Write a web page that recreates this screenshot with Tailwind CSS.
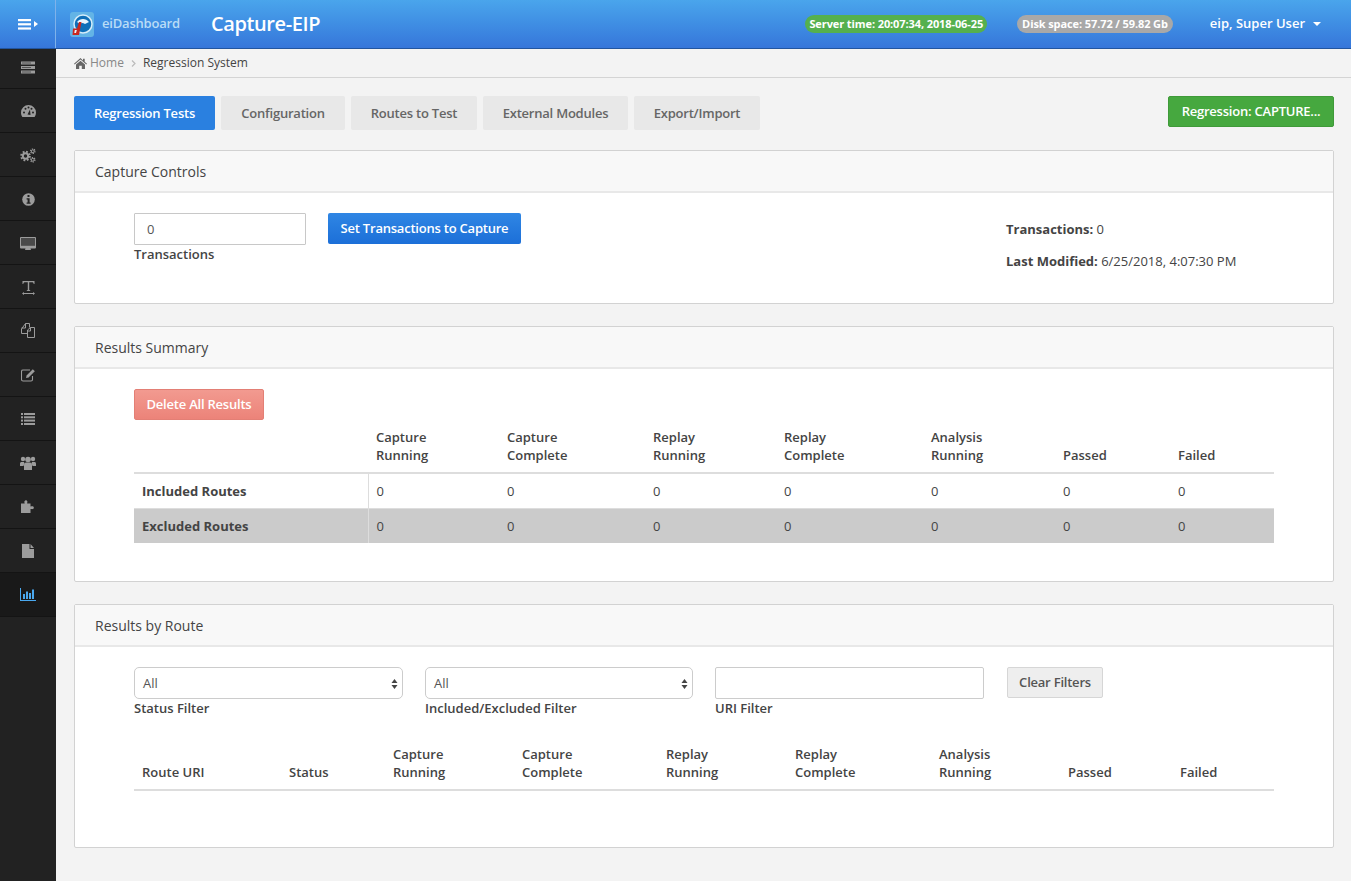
<!DOCTYPE html>
<html lang="en">
<head>
    <meta charset="UTF-8">
    <title>Capture-EIP</title>
    <script src="https://cdn.jsdelivr.net/npm/@tailwindcss/browser@4"></script>
</head>
<body class="font-['Open_Sans',sans-serif] text-[13px] text-[#444] bg-[#f3f3f3] h-[881px] overflow-hidden flex flex-col">

    <!-- top bar -->
    <header class="h-[49px] shrink-0 flex items-center bg-gradient-to-b from-[#4aa5ec] to-[#3676da] border-b border-[#22559f] text-white">
        <div class="w-[56px] h-full flex items-center justify-center gap-[3px] border-r border-[#7fb2ea]">
            <svg width="13" height="11" viewBox="0 0 13 11" fill="#fff"><rect y="0" width="13" height="2.2"/><rect y="4.2" width="13" height="2.2"/><rect y="8.4" width="13" height="2.2"/></svg>
            <svg width="4" height="6" viewBox="0 0 4 6" fill="#fff"><path d="M0 0l4 3-4 3z"/></svg>
        </div>
        <div class="ml-[14px] flex items-center">
            <svg width="24" height="25" viewBox="0 0 24 25">
                <rect width="24" height="25" rx="3" fill="#63b4e6"/>
                <circle cx="13" cy="12" r="9" fill="#0f6fb8" stroke="#d5ecf9" stroke-width="1.500"/>
                <path d="M7 10c3-4 9-4 12 0l-4 2c-2-1.500-4-1.500-5 0z" fill="#e8f5fc"/>
                <path d="M9 10h2.500L9 23H2.500L3 16.500h4z" fill="#c8281f"/>
                <path d="M4.800 18h2l-.8 3H4.300z" fill="#e9f4fb"/>
            </svg>
            <span class="ml-[8px] text-[13px] font-semibold tracking-[-0.2px] text-[#b9dcf6] w-[85px]">eiDashboard</span>
        </div>
        <h1 class="ml-[24px] text-[20px] font-semibold tracking-[-0.4px] leading-none">Capture-EIP</h1>
        <span class="ml-auto h-[18px] px-[4px] rounded-full bg-[#55b04e] text-[11px] font-bold tracking-[-0.1px] leading-[18px]">Server time: 20:07:34, 2018-06-25</span>
        <span class="ml-[30px] h-[18px] px-[5px] rounded-full bg-[#a8a8a8] text-[11px] font-bold tracking-[-0.1px] leading-[18px]">Disk space: 57.72 / 59.82 Gb</span>
        <span class="ml-[37px] text-[13px] font-semibold">eip, Super User</span>
        <span class="ml-[8px] mr-[30px] w-0 h-0 border-x-[4px] border-x-transparent border-t-[4px] border-t-white"></span>
    </header>

    <div class="flex flex-1 min-h-0">
        <!-- icon rail -->
        <nav class="w-[56px] shrink-0 bg-[#222] text-[#9c9c9c] flex flex-col">
            <a class="h-[40px] pb-[2px] flex items-center justify-center border-b border-[#141414]">
                <svg width="15" height="13" viewBox="0 0 15 13" fill="currentColor"><rect y="0.5" width="14" height="3"/><rect y="5" width="14" height="3"/><rect y="9.5" width="14" height="3"/><rect x="1" y="1.500" width="9" height="1" fill="#555"/><rect x="1" y="6" width="9" height="1" fill="#555"/><rect x="1" y="10.500" width="9" height="1" fill="#555"/></svg>
            </a>
            <a class="h-[44px] flex items-center justify-center border-b border-[#141414]">
                <svg width="15" height="12" viewBox="0 0 15 12" fill="currentColor"><path d="M7.500 0A7.500 7.500 0 0 0 0 7.500c0 1.700.5 3.200 1.400 4.500h12.200A7.500 7.500 0 0 0 15 7.500 7.500 7.500 0 0 0 7.500 0z"/><circle cx="3" cy="7.500" r="1" fill="#222"/><circle cx="4.500" cy="3.800" r="1" fill="#222"/><circle cx="7.500" cy="2.500" r="1" fill="#222"/><circle cx="10.500" cy="3.800" r="1" fill="#222"/><circle cx="12" cy="7.500" r="1" fill="#222"/><path d="M6.500 9.500l2.500-5 .5 5.500z" fill="#222"/></svg>
            </a>
            <a class="h-[44px] pt-[2px] flex items-center justify-center border-b border-[#141414]">
                <svg width="16" height="15" viewBox="0 0 16 15" fill="none" stroke="currentColor"><circle cx="5.500" cy="8" r="4.300" stroke-width="2" stroke-dasharray="1.800 1.580"/><circle cx="5.500" cy="8" r="2.700" stroke-width="2"/><circle cx="12.800" cy="3.200" r="2.200" stroke-width="1.200" stroke-dasharray="1.200 .9"/><circle cx="12.800" cy="3.200" r="1.400" stroke-width="1"/><circle cx="12.800" cy="11.800" r="2.200" stroke-width="1.200" stroke-dasharray="1.200 .9"/><circle cx="12.800" cy="11.800" r="1.400" stroke-width="1"/></svg>
            </a>
            <a class="h-[44px] pt-[1px] flex items-center justify-center border-b border-[#141414]">
                <svg width="13" height="13" viewBox="0 0 13 13"><circle cx="6.500" cy="6.500" r="6.300" fill="currentColor"/><rect x="5.500" y="2" width="2" height="2" fill="#222"/><path d="M4.600 5.200h3v4.200h1v1.300H4.600V9.400h1V6.500h-1z" fill="#222"/></svg>
            </a>
            <a class="h-[44px] pt-[2px] flex items-center justify-center border-b border-[#141414]">
                <svg width="16" height="14" viewBox="0 0 16 14"><path d="M1 0h14a1 1 0 0 1 1 1v9.500a1 1 0 0 1-1 1h-4.500l.5 1.500H5l.5-1.500H1a1 1 0 0 1-1-1V1a1 1 0 0 1 1-1z" fill="currentColor"/><rect x="1" y="1" width="14" height="7.800" fill="#4a4a4a"/></svg>
            </a>
            <a class="h-[44px] pt-[2px] flex items-center justify-center border-b border-[#141414]">
                <svg width="13" height="14" viewBox="0 0 13 14" fill="currentColor"><path d="M0.500 0h12v3h-.8c-.2-1-.5-1.700-1.200-1.700H7.200v7.700l1 .3v.6H4.800V9.300l1-.3V1.300H2.500c-.7 0-1 .7-1.200 1.700H.500z"/><path d="M0 12.500l2-1.500v1h9v-1l2 1.500L11 14v-1H2v1z"/></svg>
            </a>
            <a class="h-[44px] flex items-center justify-center border-b border-[#141414]">
                <svg width="14" height="15" viewBox="0 0 14 15" fill="none" stroke="currentColor" stroke-width="1"><path d="M6.500 10.500H.500V6l4-5.500h4v4"/><path d="M4.500.5V5H.5"/><path d="M6.500 14.500V7l3-2.500h4v10z"/><path d="M9.500 4.500V8h-3"/></svg>
            </a>
            <a class="h-[44px] flex items-center justify-center border-b border-[#141414]">
                <svg width="15" height="14" viewBox="0 0 15 14" fill="none" stroke="currentColor"><path d="M11.500 8v3.500a1.500 1.500 0 0 1-1.500 1.500H2a1.500 1.500 0 0 1-1.500-1.500v-8A1.500 1.500 0 0 1 2 2h7" stroke-width="1.100"/><path d="M5 10l.6-2.600L11.800 1.200l2 2L7.600 9.400z" fill="currentColor" stroke="none"/></svg>
            </a>
            <a class="h-[44px] flex items-center justify-center border-b border-[#141414]">
                <svg width="14" height="12" viewBox="0 0 14 12" fill="currentColor"><rect y="0" width="2" height="2"/><rect x="3" y="0" width="11" height="2"/><rect y="3.300" width="2" height="2"/><rect x="3" y="3.300" width="11" height="2"/><rect y="6.600" width="2" height="2"/><rect x="3" y="6.600" width="11" height="2"/><rect y="10" width="2" height="2"/><rect x="3" y="10" width="11" height="2"/></svg>
            </a>
            <a class="h-[44px] flex items-center justify-center border-b border-[#141414]">
                <svg width="16" height="14" viewBox="0 0 16 14" fill="currentColor"><circle cx="3" cy="3" r="2.200"/><circle cx="13" cy="3" r="2.200"/><circle cx="8" cy="3.500" r="2.800"/><path d="M0 10V7.500C0 6.500.8 6 1.500 6H4l.5 1.500L3.500 10z"/><path d="M16 10V7.500c0-1-.8-1.500-1.500-1.500H12l-.5 1.500 1 2.500z"/><path d="M4 14V9c0-1.500 1-2.500 2-2.500h4c1 0 2 1 2 2.500v5z"/></svg>
            </a>
            <a class="h-[44px] flex items-center justify-center border-b border-[#141414]">
                <svg width="14" height="13" viewBox="0 0 14 13" fill="currentColor"><path d="M0 3.500h3.500c.5-.5-.5-1 0-2.300C4 0 6 0 6.300 1.200c.4 1.300-.5 1.800 0 2.300H9.500v2.800c.5.500 1-.3 2.200 0 1.500.4 1.500 2.400 0 2.800-1.200.3-1.700-.5-2.200 0V13H0z"/></svg>
            </a>
            <a class="h-[44px] flex items-center justify-center border-b border-[#141414]">
                <svg width="12" height="14" viewBox="0 0 12 14" fill="currentColor"><path d="M0 0h7.500v5H12v9H0z"/><path d="M8.500 0L12 4H8.500z"/></svg>
            </a>
            <a class="h-[44px] flex items-center justify-center bg-[#191919] border-b border-[#141414] text-[#4aa8ee]">
                <svg width="16" height="13" viewBox="0 0 16 13" fill="currentColor"><path d="M0 0h1v12h15v1H0z"/><rect x="3" y="6" width="2" height="5"/><rect x="6" y="3.500" width="2" height="7.500"/><rect x="9" y="5" width="2" height="6"/><rect x="12" y="1.500" width="2" height="9.500"/></svg>
            </a>
        </nav>

        <main class="flex-1 min-w-0 flex flex-col">
            <!-- breadcrumb -->
            <div class="h-[29px] shrink-0 flex items-center pl-[18px] border-b border-[#d4d4d4] text-[12px]">
                <svg width="13" height="11" viewBox="0 0 13 11" fill="#666" class="mr-[3px]"><path d="M6.500 0L0 5.700l.7.800L6.500 1.500l5.800 5 .7-.8-2.300-2V.7H9v1.700z"/><path d="M2 6.500L6.500 2.700 11 6.500V11H7.800V7.800H5.200V11H2z"/></svg>
                <span class="text-[#888]">Home</span>
                <svg width="5" height="7" viewBox="0 0 5 7" fill="none" stroke="#bbb" stroke-width="1.200" class="mx-[7px]"><path d="M1 .5l3 3-3 3"/></svg>
                <span class="text-[#444]">Regression System</span>
            </div>

            <div class="flex-1 min-h-0 pl-[18px] pr-[17px]">
                <!-- tabs -->
                <div class="mt-[18px] flex items-start">
                    <a class="h-[34px] w-[141px] justify-center pt-px flex items-center rounded-[2px] bg-[#2a80e0] text-white font-semibold tracking-[-0.22px]">Regression Tests</a>
                    <a class="ml-[6px] h-[34px] w-[124px] justify-center pt-px flex items-center rounded-[2px] bg-[#e8e8e8] text-[#666] font-semibold tracking-[-0.22px]">Configuration</a>
                    <a class="ml-[6px] h-[34px] w-[126px] justify-center pt-px flex items-center rounded-[2px] bg-[#e8e8e8] text-[#666] font-semibold tracking-[-0.22px]">Routes to Test</a>
                    <a class="ml-[6px] h-[34px] w-[145px] justify-center pt-px flex items-center rounded-[2px] bg-[#e8e8e8] text-[#666] font-semibold tracking-[-0.22px]">External Modules</a>
                    <a class="ml-[6px] h-[34px] w-[126px] justify-center pt-px flex items-center rounded-[2px] bg-[#e8e8e8] text-[#666] font-semibold tracking-[-0.22px]">Export/Import</a>
                    <button class="ml-auto h-[31px] w-[166px] rounded-[2px] bg-[#46a83f] border border-[#3f9a39] text-white font-semibold tracking-[-0.22px]">Regression: CAPTURE...</button>
                </div>

                <!-- capture controls -->
                <section class="mt-[20px] h-[154px] bg-white border border-[#d2d2d2] rounded-[2px]">
                    <h2 class="h-[42px] pl-[20px] flex items-center bg-[#f8f8f8] border-b-2 border-[#e8e8e8] text-[14px] text-[#444]">Capture Controls</h2>
                    <div class="pl-[59px] pr-[97px] pt-[20px] flex items-start">
                        <div>
                            <input value="0" class="block w-[172px] h-[32px] px-[12px] bg-white border border-[#c8c8c8] rounded-[1px] text-[13px] text-[#555]">
                            <label class="block font-semibold text-[#444] leading-[18px]">Transactions</label>
                        </div>
                        <button class="ml-[22px] h-[31px] w-[193px] rounded-[2px] bg-gradient-to-b from-[#2f86e4] to-[#1c6fd8] text-white font-semibold tracking-[-0.22px]">Set Transactions to Capture</button>
                        <div class="ml-auto w-[230px] pt-[7px] leading-[18px] whitespace-nowrap">
                            <p><b class="font-bold">Transactions:</b> 0</p>
                            <p class="mt-[14px]"><b class="font-bold">Last Modified:</b> 6/25/2018, 4:07:30 PM</p>
                        </div>
                    </div>
                </section>

                <!-- results summary -->
                <section class="mt-[22px] h-[256px] bg-white border border-[#d2d2d2] rounded-[2px]">
                    <h2 class="h-[42px] pl-[20px] flex items-center bg-[#f8f8f8] border-b-2 border-[#e8e8e8] text-[14px] text-[#444]">Results Summary</h2>
                    <div class="pl-[59px] pr-[59px] pt-[20px]">
                        <button class="h-[31px] w-[130px] rounded-[2px] bg-gradient-to-b from-[#f29a90] to-[#ec8379] border border-[#e37f75] text-white font-semibold tracking-[-0.22px]">Delete All Results</button>
                        <table class="mt-[8px] w-[1140px] table-fixed border-collapse leading-[18px]">
                            <colgroup>
                                <col class="w-[234px]"><col class="w-[131px]"><col class="w-[146px]"><col class="w-[131px]"><col class="w-[147px]"><col class="w-[132px]"><col class="w-[115px]"><col>
                            </colgroup>
                            <thead>
                                <tr class="border-b-2 border-[#ddd] text-left align-bottom">
                                    <th class="px-[8px] pb-[8px] font-semibold"></th>
                                    <th class="px-[8px] pb-[8px] font-semibold">Capture<br>Running</th>
                                    <th class="px-[8px] pb-[8px] font-semibold">Capture<br>Complete</th>
                                    <th class="px-[8px] pb-[8px] font-semibold">Replay<br>Running</th>
                                    <th class="px-[8px] pb-[8px] font-semibold">Replay<br>Complete</th>
                                    <th class="px-[8px] pb-[8px] font-semibold">Analysis<br>Running</th>
                                    <th class="px-[8px] pb-[8px] font-semibold">Passed</th>
                                    <th class="px-[8px] pb-[8px] font-semibold">Failed</th>
                                </tr>
                            </thead>
                            <tbody>
                                <tr class="h-[35px] border-b border-[#ddd]">
                                    <th class="px-[8px] text-left font-bold border-r border-[#ddd]">Included Routes</th>
                                    <td class="px-[8px]">0</td><td class="px-[8px]">0</td><td class="px-[8px]">0</td><td class="px-[8px]">0</td><td class="px-[8px]">0</td><td class="px-[8px]">0</td><td class="px-[8px]">0</td>
                                </tr>
                                <tr class="h-[35px] bg-[#cbcbcb]">
                                    <th class="px-[8px] text-left font-bold border-r border-[#ddd]">Excluded Routes</th>
                                    <td class="px-[8px]">0</td><td class="px-[8px]">0</td><td class="px-[8px]">0</td><td class="px-[8px]">0</td><td class="px-[8px]">0</td><td class="px-[8px]">0</td><td class="px-[8px]">0</td>
                                </tr>
                            </tbody>
                        </table>
                    </div>
                </section>

                <!-- results by route -->
                <section class="mt-[22px] h-[244px] bg-white border border-[#d2d2d2] rounded-[2px]">
                    <h2 class="h-[42px] pl-[20px] flex items-center bg-[#f8f8f8] border-b-2 border-[#e8e8e8] text-[14px] text-[#444]">Results by Route</h2>
                    <div class="pl-[59px] pr-[59px] pt-[20px]">
                        <div class="flex items-start">
                            <div class="w-[269px]">
                                <div class="h-[32px] pl-[8px] pr-[4px] pt-px flex items-center justify-between border border-[#ccc] rounded-[5px] text-[#555]">
                                    <span>All</span>
                                    <svg width="7" height="12" viewBox="0 0 7 12" fill="#444"><path d="M3.500 1L6.500 5h-6zM3.500 11L.500 7h6z"/></svg>
                                </div>
                                <label class="block font-semibold leading-[18px]">Status Filter</label>
                            </div>
                            <div class="ml-[22px] w-[268px]">
                                <div class="h-[32px] pl-[8px] pr-[4px] pt-px flex items-center justify-between border border-[#ccc] rounded-[5px] text-[#555]">
                                    <span>All</span>
                                    <svg width="7" height="12" viewBox="0 0 7 12" fill="#444"><path d="M3.500 1L6.500 5h-6zM3.500 11L.500 7h6z"/></svg>
                                </div>
                                <label class="block font-semibold leading-[18px]">Included/Excluded Filter</label>
                            </div>
                            <div class="ml-[22px] w-[269px]">
                                <input class="block w-full h-[32px] border border-[#ccc] rounded-[2px] bg-white">
                                <label class="block font-semibold leading-[18px]">URI Filter</label>
                            </div>
                            <button class="ml-[23px] h-[31px] w-[96px] rounded-[2px] bg-[#eee] border border-[#d6d6d6] text-[#555] font-semibold tracking-[-0.22px]">Clear Filters</button>
                        </div>
                        <table class="mt-[28px] w-[1140px] table-fixed border-collapse leading-[18px]">
                            <colgroup>
                                <col class="w-[147px]"><col class="w-[104px]"><col class="w-[129px]"><col class="w-[144px]"><col class="w-[129px]"><col class="w-[144px]"><col class="w-[129px]"><col class="w-[112px]"><col>
                            </colgroup>
                            <thead>
                                <tr class="border-b-2 border-[#ddd] text-left align-bottom">
                                    <th class="px-[8px] pb-[8px] font-semibold">Route URI</th>
                                    <th class="px-[8px] pb-[8px] font-semibold">Status</th>
                                    <th class="px-[8px] pb-[8px] font-semibold">Capture<br>Running</th>
                                    <th class="px-[8px] pb-[8px] font-semibold">Capture<br>Complete</th>
                                    <th class="px-[8px] pb-[8px] font-semibold">Replay<br>Running</th>
                                    <th class="px-[8px] pb-[8px] font-semibold">Replay<br>Complete</th>
                                    <th class="px-[8px] pb-[8px] font-semibold">Analysis<br>Running</th>
                                    <th class="px-[8px] pb-[8px] font-semibold">Passed</th>
                                    <th class="px-[8px] pb-[8px] font-semibold">Failed</th>
                                </tr>
                            </thead>
                        </table>
                    </div>
                </section>
            </div>
        </main>
    </div>
</body>
</html>
